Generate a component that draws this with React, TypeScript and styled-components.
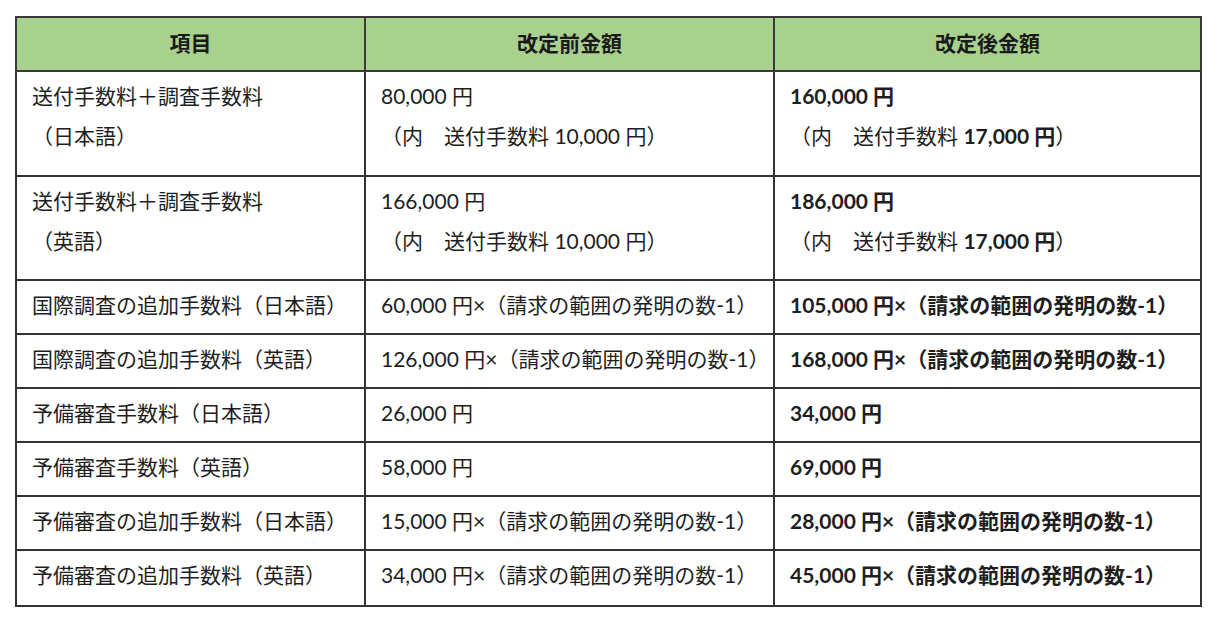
import styled, { createGlobalStyle } from "styled-components";

type Row = {
	item: string[];
	before: string[];
	after: React.ReactNode[];
	tall?: boolean;
};

const rows: Row[] = [
	{
		item: ["送付手数料＋調査手数料", "（日本語）"],
		before: ["80,000 円", "（内　送付手数料 10,000 円）"],
		after: [<b key="a">160,000 円</b>, <>（内　送付手数料 <b>17,000 円</b>）</>],
		tall: true,
	},
	{
		item: ["送付手数料＋調査手数料", "（英語）"],
		before: ["166,000 円", "（内　送付手数料 10,000 円）"],
		after: [<b key="a">186,000 円</b>, <>（内　送付手数料 <b>17,000 円</b>）</>],
		tall: true,
	},
	{
		item: ["国際調査の追加手数料（日本語）"],
		before: ["60,000 円×（請求の範囲の発明の数-1）"],
		after: [<b key="a">105,000 円×（請求の範囲の発明の数-1）</b>],
	},
	{
		item: ["国際調査の追加手数料（英語）"],
		before: ["126,000 円×（請求の範囲の発明の数-1）"],
		after: [<b key="a">168,000 円×（請求の範囲の発明の数-1）</b>],
	},
	{
		item: ["予備審査手数料（日本語）"],
		before: ["26,000 円"],
		after: [<b key="a">34,000 円</b>],
	},
	{
		item: ["予備審査手数料（英語）"],
		before: ["58,000 円"],
		after: [<b key="a">69,000 円</b>],
	},
	{
		item: ["予備審査の追加手数料（日本語）"],
		before: ["15,000 円×（請求の範囲の発明の数-1）"],
		after: [<b key="a">28,000 円×（請求の範囲の発明の数-1）</b>],
	},
	{
		item: ["予備審査の追加手数料（英語）"],
		before: ["34,000 円×（請求の範囲の発明の数-1）"],
		after: [<b key="a">45,000 円×（請求の範囲の発明の数-1）</b>],
	},
];

export default function App() {
	return (
		<>
			<GlobalStyle />
			<Page>
				<FeeTable>
					<colgroup>
						<col style={{ width: 349 }} />
						<col style={{ width: 409 }} />
						<col style={{ width: 427 }} />
					</colgroup>
					<thead>
						<tr>
							<HeadCell>項目</HeadCell>
							<HeadCell>改定前金額</HeadCell>
							<HeadCell>改定後金額</HeadCell>
						</tr>
					</thead>
					<tbody>
						{rows.map((row, i) => (
							<tr key={i}>
								<Cell $tall={row.tall}>
									{row.item.map((line, j) => (
										<Line key={j}>{line}</Line>
									))}
								</Cell>
								<Cell $tall={row.tall}>
									{row.before.map((line, j) => (
										<Line key={j}>{line}</Line>
									))}
								</Cell>
								<Cell $tall={row.tall}>
									{row.after.map((line, j) => (
										<Line key={j}>{line}</Line>
									))}
								</Cell>
							</tr>
						))}
					</tbody>
				</FeeTable>
			</Page>
		</>
	);
}

const GlobalStyle = createGlobalStyle`
	body {
		margin: 0;
		background: #ffffff;
		font-family: Lato, "Noto Sans CJK JP", sans-serif;
		color: #1e1e1e;
	}
`;

const Page = styled.div`
	padding: 16px 0 0 15px;
`;

const FeeTable = styled.table`
	border-collapse: collapse;
	table-layout: fixed;
	width: 1185px;
	font-size: 21px;

	b {
		font-weight: 700;
	}

	tbody tr:last-child td {
		padding-bottom: 10px;
	}
`;

const HeadCell = styled.th`
	background: #a9d18e;
	border: 2px solid #3a3a3a;
	padding: 5px 16px 7px;
	line-height: 40px;
	font-weight: 700;
	text-align: center;
	color: #1a1a1a;
`;

const Cell = styled.td<{ $tall?: boolean }>`
	border: 2px solid #333333;
	padding: 4px 16px ${({ $tall }) => ($tall ? "18.5px" : "8px")} 15px;
	vertical-align: top;
	line-height: 40px;
	white-space: nowrap;
`;

const Line = styled.div`
	height: 40px;
`;
